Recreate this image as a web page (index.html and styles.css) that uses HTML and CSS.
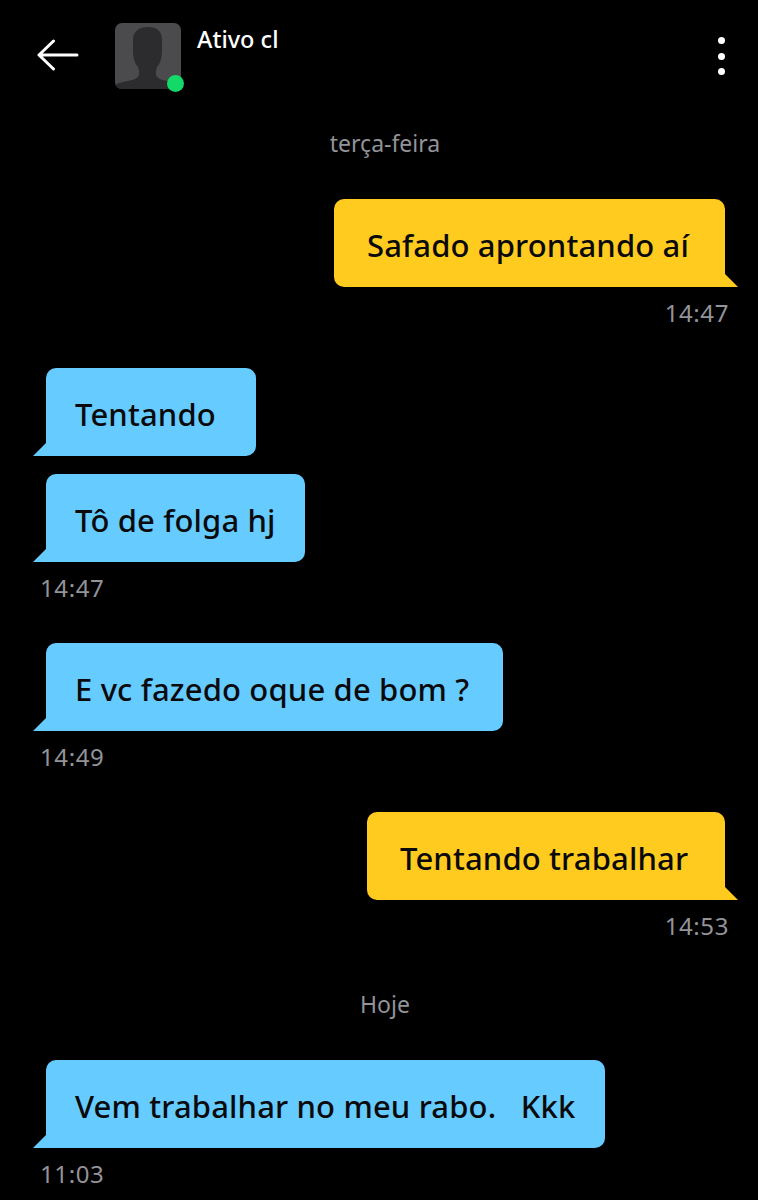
FILE: index.html
```html
<!DOCTYPE html>
<html lang="pt">
<head>
<meta charset="utf-8">
<title>Conversa</title>
<link rel="stylesheet" href="styles.css">
</head>
<body>
<div class="screen">
  <header class="header">
    <svg class="back" width="42" height="32" viewBox="0 0 42 32" fill="none" stroke="#fff" stroke-width="3" stroke-linecap="round" stroke-linejoin="round"><path d="M40 16H2M16.500 2 2 16l14.500 14"/></svg>
    <div class="avatar">
      <svg width="66" height="66" viewBox="0 0 66 66"><path fill="#2c2c2e" d="M3 66c-2 0-3-1-3-3 2-3 8-4 13-5 6-1 10-3 11-6 .5-2 0-5-1-8-3-3-5-9-5-16V17C18 8 24 4 33 4s14 4 14 13v11c0 7-2 13-5 16-1 3-1.500 6-1 8 1 3 5 5 11 6 5 1 10 2 14 5 0 2-1 3-3 3z"/></svg>
      <span class="dot"></span>
    </div>
    <div class="name">Ativo cl</div>
    <div class="menu"><i></i><i></i><i></i></div>
  </header>
  <main class="chat">
    <div class="day">terça-feira</div>
    <section class="group mine">
      <div class="bubble w-safado">Safado aprontando aí</div>
      <div class="time">14:47</div>
    </section>
    <section class="group theirs">
      <div class="bubble w-tentando">Tentando</div>
      <div class="bubble w-folga">Tô de folga hj</div>
      <div class="time">14:47</div>
    </section>
    <section class="group theirs">
      <div class="bubble w-fazedo">E vc fazedo oque de bom ?</div>
      <div class="time">14:49</div>
    </section>
    <section class="group mine">
      <div class="bubble w-trab">Tentando trabalhar</div>
      <div class="time">14:53</div>
    </section>
    <div class="day today">Hoje</div>
    <section class="group theirs">
      <div class="bubble w-rabo">Vem trabalhar no meu rabo. &nbsp; Kkk</div>
      <div class="time">11:03</div>
    </section>
  </main>
</div>
</body>
</html>
```
FILE: styles.css
```css
* { box-sizing: border-box; }
html, body { margin: 0; background: #000; }
body { font-family: "Noto Sans", "Liberation Sans", sans-serif; }
.screen { width: 758px; height: 1200px; overflow: hidden; background: #000; }

.header { height: 129px; display: flex; align-items: flex-start; padding: 23px 33px 0 38px; color: #fff; }
.back { margin-top: 16px; margin-left: -1px; flex: none; }
.avatar { position: relative; width: 66px; height: 66px; margin-left: 36px; border-radius: 7px; background: #4b4b4e; flex: none; }
.avatar svg { display: block; border-radius: 7px; }
.dot { position: absolute; right: -3px; bottom: -3px; width: 17px; height: 17px; border-radius: 50%; background: #12d968; }
.name { margin-left: 16px; margin-top: -1px; font-size: 23.500px; line-height: 34px; font-weight: 500; }
.menu { margin-left: auto; margin-top: 14px; display: flex; flex-direction: column; gap: 8.500px; }
.menu i { display: block; width: 7px; height: 7px; border-radius: 50%; background: #fff; }

.chat { display: flex; flex-direction: column; padding: 0 29px 0 40px; }
.day { height: 30px; line-height: 28px; padding-left: 1px; text-align: center; font-size: 23px; color: #939398; }
.day.today { margin-top: 49px; }
.group { display: flex; flex-direction: column; margin-top: 40px; }
.mine { align-items: flex-end; }
.theirs { align-items: flex-start; }

.bubble { position: relative; height: 88px; display: flex; align-items: center; padding-top: 3px; border-radius: 10px; font-size: 31px; font-weight: 500; letter-spacing: 0.15px; color: #0a0a0c; white-space: nowrap; }
.bubble + .bubble { margin-top: 18px; }
.mine .bubble { margin-right: 4px; padding-left: 33px; background: #ffcb1f; border-bottom-right-radius: 0; }
.theirs .bubble { margin-left: 6px; padding-left: 29px; background: #66ccff; border-bottom-left-radius: 0; }
.bubble::after { content: ""; position: absolute; bottom: 0; width: 13px; height: 13px; }
.mine .bubble::after { left: 100%; background: #ffcb1f; clip-path: polygon(0 0, 100% 100%, 0 100%); }
.theirs .bubble::after { right: 100%; background: #66ccff; clip-path: polygon(100% 0, 100% 100%, 0 100%); }

.w-safado { width: 391px; }
.w-tentando { width: 210px; }
.w-folga { width: 259px; }
.w-fazedo { width: 457px; }
.w-trab { width: 358px; }
.w-rabo { width: 559px; }

.time { height: 30px; line-height: 30px; margin-top: 11px; font-size: 24px; letter-spacing: 0.6px; color: #939398; }
```
